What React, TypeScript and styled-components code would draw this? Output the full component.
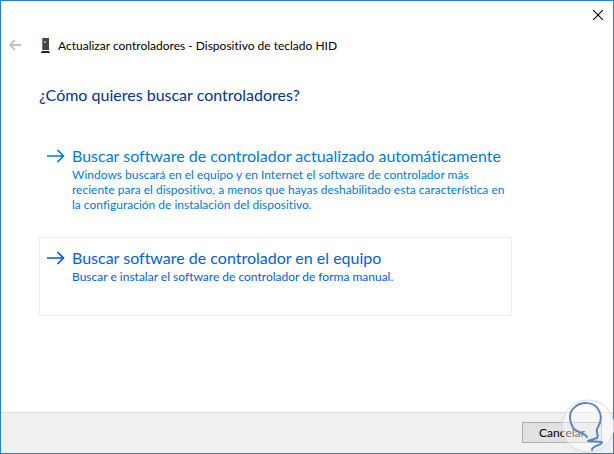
import React from 'react';
import styled, { createGlobalStyle } from 'styled-components';

const GlobalStyle = createGlobalStyle`
  *, *::before, *::after { box-sizing: border-box; }
  body { margin: 0; background: #fff; }
  button { font: inherit; color: inherit; border-radius: 0; }
`;

const Dialog = styled.main`
  position: relative;
  display: flex;
  flex-direction: column;
  min-height: 100vh;
  border: 1px solid #1883d7;
  background: #fff;
  color: #000;
  font-family: Lato, 'Noto Sans', sans-serif;
  font-size: 12px;
  line-height: 15px;
  font-variant-ligatures: none;
`;

const TitleBar = styled.div`
  display: flex;
  justify-content: flex-end;
  height: 29px;
`;

const IconButton = styled.button`
  display: flex;
  align-items: center;
  justify-content: center;
  padding: 0;
  border: 0;
  background: transparent;
`;

const CloseButton = styled(IconButton)`
  width: 31px;
  height: 28px;
`;

const Header = styled.header`
  display: flex;
  align-items: center;
  height: 30px;
  padding-left: 7px;
`;

const BackButton = styled(IconButton)`
  width: 14px;
  height: 14px;
  margin-right: 18px;
`;

const WindowTitle = styled.h1`
  margin: 0 0 0 7px;
  font-size: 12px;
  font-weight: 400;
  white-space: nowrap;
`;

const Content = styled.section`
  flex: 1;
  padding: 24px 101px 24px 38px;
`;

const Question = styled.h2`
  margin: 0;
  color: #003399;
  font-size: 16px;
  line-height: 22px;
  font-weight: 400;
  white-space: nowrap;
`;

const Options = styled.div`
  display: flex;
  flex-direction: column;
  gap: 12px;
  margin-top: 29px;
`;

const Option = styled.button<{ $active?: boolean }>`
  display: grid;
  grid-template-columns: 25px 1fr;
  align-content: start;
  width: 100%;
  min-height: 79px;
  padding: 9px 0 12px 7px;
  border: 1px solid ${(p) => (p.$active ? '#f0f0f0' : 'transparent')};
  background: transparent;
  color: ${(p) => (p.$active ? '#0060e6' : '#007ade')};
  text-align: left;
`;

const ArrowCell = styled.span`
  display: flex;
  align-items: center;
  height: 22px;
`;

const OptionTitle = styled.span`
  font-size: 16px;
  line-height: 22px;
  white-space: nowrap;
`;

const Description = styled.span`
  grid-column: 2;
  white-space: pre;
`;

const Footer = styled.footer`
  display: flex;
  justify-content: flex-end;
  align-items: flex-start;
  height: 41px;
  padding: 9px 11px 0;
  border-top: 1px solid #dfdfdf;
  background: #f0f0f0;
`;

const CancelButton = styled.button`
  width: 80px;
  height: 21px;
  padding: 0;
  border: 1px solid #adadad;
  background: #e1e1e1;
  line-height: 19px;
`;

const Badge = styled.svg`
  position: absolute;
  right: -1px;
  bottom: -1px;
  pointer-events: none;
`;

const Arrow = () => (
  <svg width="18" height="14" viewBox="0 0 18 14" fill="none" stroke="currentColor" strokeWidth="1.7" aria-hidden="true">
    <path d="M0 7H17M10.5 1L16.5 7L10.5 13" />
  </svg>
);

const options = [
  {
    title: 'Buscar software de controlador actualizado automáticamente',
    description:
      'Windows buscará en el equipo y en Internet el software de controlador más\nreciente para el dispositivo, a menos que hayas deshabilitado esta característica en\nla configuración de instalación del dispositivo.',
  },
  {
    title: 'Buscar software de controlador en el equipo',
    description: 'Buscar e instalar el software de controlador de forma manual.',
    active: true,
  },
];

export default function App() {
  return (
    <>
      <GlobalStyle />
      <Dialog>
        <TitleBar>
          <CloseButton aria-label="Cerrar">
            <svg width="10" height="10" viewBox="0 0 10 10" stroke="#000" strokeWidth="1.1" aria-hidden="true">
              <path d="M0 0L10 10M10 0L0 10" />
            </svg>
          </CloseButton>
        </TitleBar>
        <Header>
          <BackButton aria-label="Atrás" disabled>
            <svg width="12" height="12" viewBox="0 0 12 12" fill="none" stroke="#c3c3c3" strokeWidth="1.8" aria-hidden="true">
              <path d="M12 6H1M6 1L1 6L6 11" />
            </svg>
          </BackButton>
          <svg width="11" height="15" viewBox="0 0 11 15" aria-hidden="true">
            <path d="M2 0H9V12H2Z" fill="#454545" />
            <path d="M2 0H3V12H2Z" fill="#777" />
            <path d="M2 13H9V14H10V15H1V14H2Z" fill="#222" />
            <path d="M4 3H6V5H4Z" fill="#3bea4b" />
          </svg>
          <WindowTitle>Actualizar controladores - Dispositivo de teclado HID</WindowTitle>
        </Header>
        <Content>
          <Question>¿Cómo quieres buscar controladores?</Question>
          <Options>
            {options.map((o) => (
              <Option key={o.title} $active={o.active}>
                <ArrowCell>
                  <Arrow />
                </ArrowCell>
                <OptionTitle>{o.title}</OptionTitle>
                <Description>{o.description}</Description>
              </Option>
            ))}
          </Options>
        </Content>
        <Footer>
          <CancelButton>Cancelar</CancelButton>
        </Footer>
        <Badge width="54" height="56" viewBox="0 0 54 56" fill="none" aria-hidden="true">
          <circle cx="28" cy="28" r="26" fill="#fff" fillOpacity="0.45" stroke="#d5dbe6" />
          <path d="M27 39C24 34 18 35 14 31C9 24 8 14 15 9C22 3 34 4 38 11C42 17 41 24 38 29C34 34 40 37 37 40L28 43L42 44C42 48 32 47 32 52" stroke="#5b86bf" strokeWidth="2" strokeLinecap="round" strokeLinejoin="round" />
        </Badge>
      </Dialog>
    </>
  );
}
